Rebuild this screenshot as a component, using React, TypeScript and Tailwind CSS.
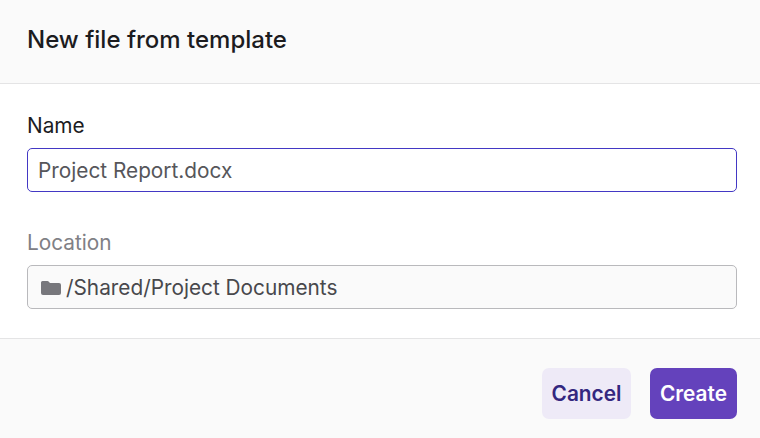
import React from "react";

export default function App() {
  return (
    <div className="w-[760px] h-[438px] flex flex-col bg-white overflow-hidden font-['Inter',sans-serif]">
      <header className="h-[84px] shrink-0 flex items-center px-[27px] pb-[4px] bg-[#fafafa] border-b border-[#e4e4e5]">
        <h1 className="text-[24px] font-medium text-[#1c1c1f]">New file from template</h1>
      </header>

      <main className="flex-1 flex flex-col px-[27px] pt-[30px]">
        <label className="block text-[20.8px] leading-[24px] text-[#1c1c1f] mb-[10px]">Name</label>
        <input
          type="text"
          defaultValue="Project Report.docx"
          className="w-[710px] h-[44px] px-[10px] rounded-[5px] border border-[#4338c4] bg-white text-[20.8px] text-[#56565a] outline-none"
        />

        <label className="block text-[20.8px] leading-[24px] text-[#808085] mt-[39px] mb-[10px]">Location</label>
        <div className="w-[710px] h-[44px] px-[13px] pt-[1px] flex items-center gap-[5px] rounded-[5px] border border-[#b9b9bc] bg-[#fafafa] text-[20.8px] text-[#48484c]">
          <svg width="20" height="16" viewBox="0 0 20 16" className="shrink-0" fill="#77777c">
            <path d="M0 2.5A1.5 1.5 0 0 1 1.5 1h5a1.5 1.5 0 0 1 1.1.5L9 3h9a2 2 0 0 1 2 2v8a2 2 0 0 1-2 2H2a2 2 0 0 1-2-2z" />
          </svg>
          <span>/Shared/Project Documents</span>
        </div>
      </main>

      <footer className="h-[100px] shrink-0 flex items-start justify-end gap-[19px] pr-[23px] pt-[29px] bg-[#fafafa] border-t border-[#e4e4e5]">
        <button className="w-[89px] h-[51px] rounded-[7px] bg-[#eeeaf7] text-[20.8px] font-semibold text-[#33277f]">Cancel</button>
        <button className="w-[87px] h-[51px] rounded-[7px] bg-[#6442bc] text-[20.8px] font-semibold text-white">Create</button>
      </footer>
    </div>
  );
}
